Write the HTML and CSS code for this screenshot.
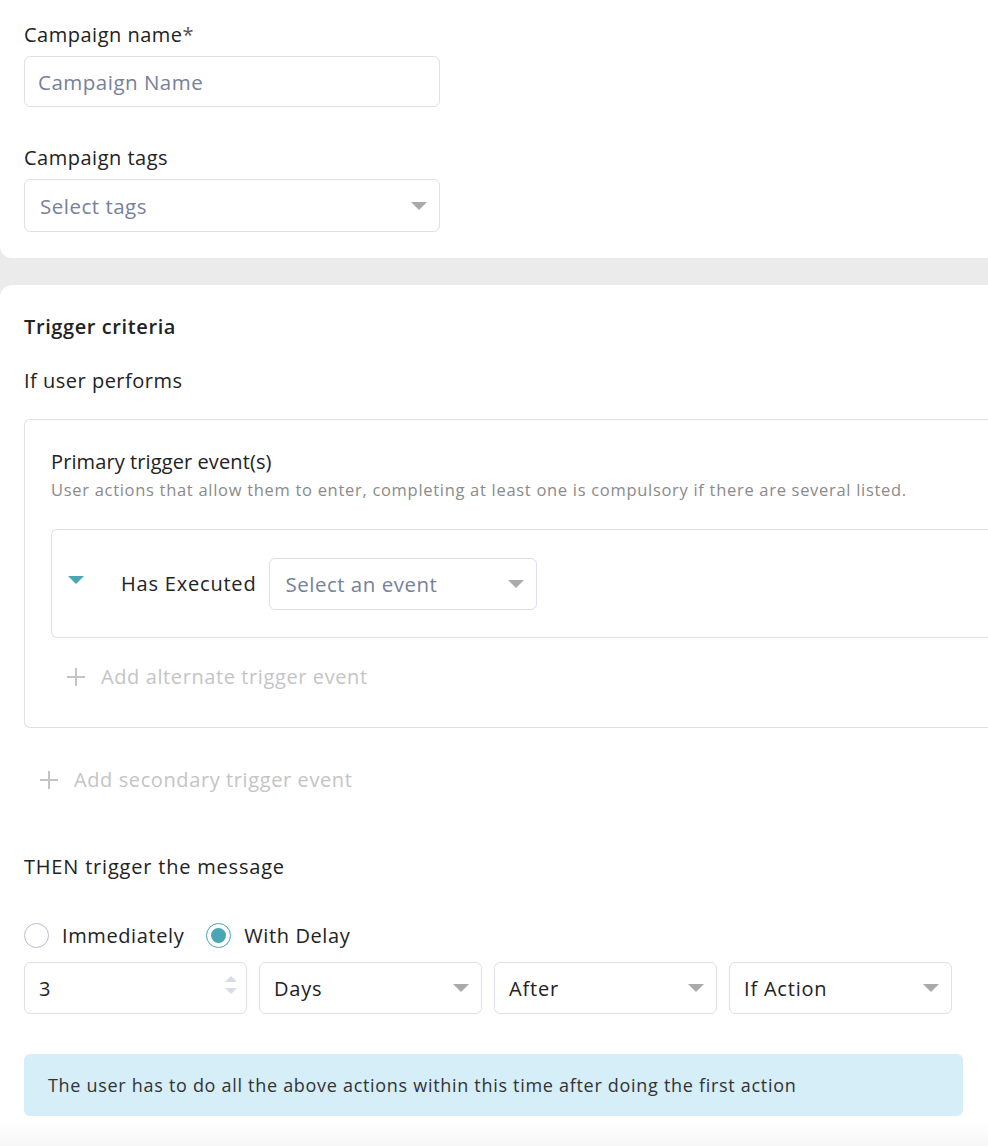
FILE: index.html
```html
<!DOCTYPE html>
<html>
<head>
<meta charset="utf-8">
<link rel="stylesheet" href="styles.css">
</head>
<body>
<div class="page">
  <section class="card card-top">
    <div class="field">
      <div class="label">Campaign name<span class="req">*</span></div>
      <div class="input name-input"><span class="ph">Campaign Name</span></div>
    </div>
    <div class="field field-tags">
      <div class="label">Campaign tags</div>
      <div class="input select tags-input"><span class="ph">Select tags</span><span class="caret"></span></div>
    </div>
  </section>
  <section class="card card-trigger">
    <h2 class="title">Trigger criteria</h2>
    <div class="label perf">If user performs</div>
    <div class="primary">
      <div class="ptitle">Primary trigger event(s)</div>
      <div class="psub">User actions that allow them to enter, completing at least one is compulsory if there are several listed.</div>
      <div class="event">
        <span class="tcaret"></span>
        <span class="has">Has Executed</span>
        <div class="input select event-input"><span class="ph">Select an event</span><span class="caret"></span></div>
      </div>
      <div class="add add-alt"><span class="plus"></span>Add alternate trigger event</div>
    </div>
    <div class="add add-sec"><span class="plus"></span>Add secondary trigger event</div>
    <div class="label then">THEN trigger the message</div>
    <div class="radios">
      <label class="radio"><span class="circle"></span>Immediately</label>
      <label class="radio on"><span class="circle"></span>With Delay</label>
    </div>
    <div class="delay-row">
      <div class="input box num"><span class="val">3</span><span class="spin"><span class="up"></span><span class="down"></span></span></div>
      <div class="input box select"><span class="val">Days</span><span class="caret"></span></div>
      <div class="input box select"><span class="val">After</span><span class="caret"></span></div>
      <div class="input box select"><span class="val">If Action</span><span class="caret"></span></div>
    </div>
    <div class="info">The user has to do all the above actions within this time after doing the first action</div>
  </section>
</div>
</body>
</html>
```
FILE: styles.css
```css
html, body {
  margin: 0;
  padding: 0;
  background: #ebebeb;
  overflow: hidden;
}
body {
  width: 988px;
  height: 1146px;
  font-family: "Open Sans", "Noto Sans", sans-serif;
  color: #222;
}
.page {
  width: 1100px;
}
.card {
  background: #fff;
  box-sizing: border-box;
  padding-left: 24px;
}
.card-top {
  border-radius: 0 0 12px 12px;
  padding-top: 22px;
  height: 258px;
}
.card-trigger {
  margin-top: 27px;
  border-radius: 12px 12px 0 0;
  padding-top: 29px;
  height: 861px;
  background: linear-gradient(#fff 0, #fff 835px, #f7f7f7 861px);
}
.label {
  font-size: 20px;
  line-height: 26px;
  letter-spacing: 0.5px;
  color: #222;
}
.then { letter-spacing: 0.8px; }
.req { color: #555; }
.input {
  box-sizing: border-box;
  border: 1px solid #dde0ea;
  border-radius: 6px;
  background: #fff;
  display: flex;
  align-items: center;
  position: relative;
}
.ph { color: #76819a; font-size: 20.5px; letter-spacing: 0.5px; }
.name-input {
  width: 416px;
  height: 51px;
  margin-top: 8px;
  padding-left: 13px;
}
.field-tags { margin-top: 38px; }
.tags-input {
  width: 416px;
  height: 53px;
  margin-top: 8px;
  padding-left: 15px;
}
.caret {
  position: absolute;
  right: 12px;
  top: 50%;
  margin-top: -4px;
  width: 0; height: 0;
  border-left: 8px solid transparent;
  border-right: 8px solid transparent;
  border-top: 8px solid #aaaaaa;
}
.title {
  margin: 0;
  font-size: 20px;
  font-weight: 600;
  line-height: 26px;
  letter-spacing: 0.6px;
  color: #222;
}
.perf { margin-top: 28px; }
.primary {
  margin-top: 25px;
  border: 1px solid #dfe1e8;
  border-right: none;
  border-radius: 6px 0 0 6px;
  height: 309px;
  box-sizing: border-box;
  padding: 29px 0 0 26px;
}
.ptitle { font-size: 20px; line-height: 26px; font-weight: 500; letter-spacing: 0.1px; color: #222; }
.psub { font-size: 16.5px; color: #8a8a8a; line-height: 22px; margin-top: 4px; letter-spacing: 0.7px; }
.event {
  margin-top: 28px;
  border: 1px solid #dfe1e8;
  border-right: none;
  border-radius: 6px 0 0 6px;
  height: 109px;
  box-sizing: border-box;
  display: flex;
  align-items: center;
  padding-left: 16px;
}
.tcaret {
  width: 0; height: 0;
  border-left: 8px solid transparent;
  border-right: 8px solid transparent;
  border-top: 8px solid #4aa5b5;
  margin-top: -8px;
}
.has { font-size: 20px; color: #222; margin-left: 37px; letter-spacing: 0.8px; }
.event-input {
  margin-left: 13px;
  width: 268px;
  height: 52px;
  padding-left: 15px;
}
.add {
  display: flex;
  align-items: center;
  font-size: 20px;
  letter-spacing: 0.6px;
  color: #c4c4c4;
}
.plus {
  width: 18px; height: 18px;
  margin-right: 16px;
  background:
    linear-gradient(#c4c4c4, #c4c4c4) center/18px 2px no-repeat,
    linear-gradient(#c4c4c4, #c4c4c4) center/2px 18px no-repeat;
}
.add-alt { margin-top: 25px; margin-left: 16px; }
.add-sec { margin-top: 38px; margin-left: 16px; }
.then { margin-top: 61px; }
.radios {
  display: flex;
  gap: 22px;
  margin-top: 42px;
}
.radio {
  display: flex;
  align-items: center;
  font-size: 20px;
  letter-spacing: 0.6px;
  color: #222;
}
.circle {
  width: 25px; height: 25px;
  box-sizing: border-box;
  border: 1px solid #b9bcd6;
  border-radius: 50%;
  margin-right: 13px;
  display: flex;
  align-items: center;
  justify-content: center;
}
.radio.on .circle { border-color: #4aa5b5; }
.radio.on .circle::after {
  content: "";
  width: 15px; height: 15px;
  border-radius: 50%;
  background: #4aa5b5;
}
.delay-row {
  display: flex;
  gap: 12px;
  margin-top: 13px;
}
.box {
  width: 223px;
  height: 52px;
  padding-left: 14px;
  font-size: 20px;
  letter-spacing: 0.8px;
  color: #222;
}
.spin {
  position: absolute;
  right: 9px;
  top: 13px;
  display: flex;
  flex-direction: column;
  gap: 6px;
}
.up {
  width: 0; height: 0;
  border-left: 6px solid transparent;
  border-right: 6px solid transparent;
  border-bottom: 6px solid #d9dbe8;
}
.down {
  width: 0; height: 0;
  border-left: 6px solid transparent;
  border-right: 6px solid transparent;
  border-top: 6px solid #d9dbe8;
}
.info {
  margin-top: 40px;
  width: 939px;
  height: 62px;
  box-sizing: border-box;
  background: #d5eef8;
  border-radius: 6px;
  padding-left: 24px;
  display: flex;
  align-items: center;
  font-size: 18px;
  letter-spacing: 0.7px;
  color: #333;
}
```
